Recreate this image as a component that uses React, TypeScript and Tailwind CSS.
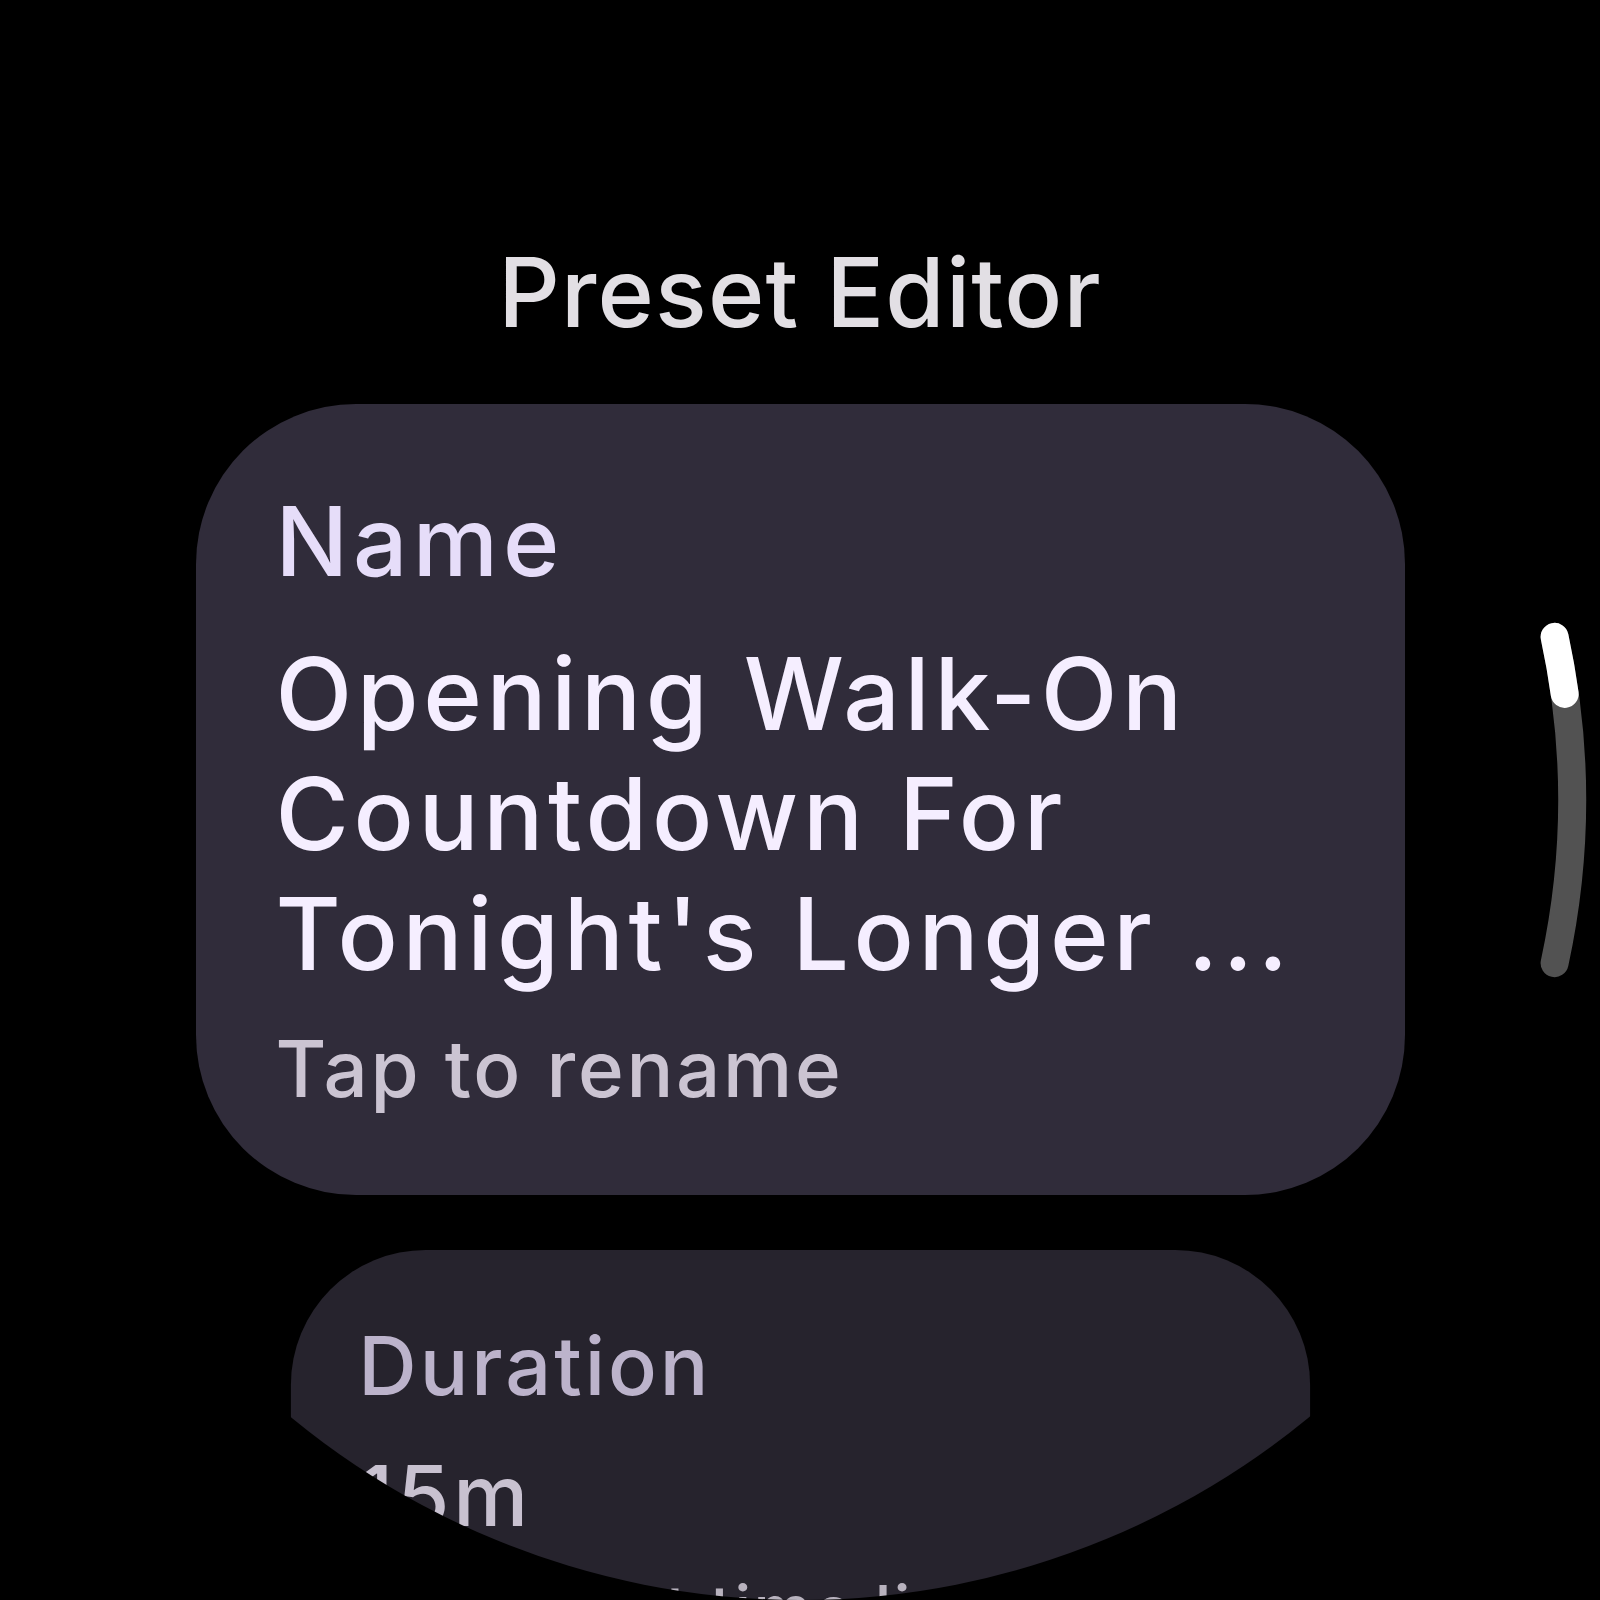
import React from "react";

type CardProps = {
  label: string;
  lines: string[];
  hint: string;
  outer: string;
  labelColor: string;
  valueColor: string;
  hintColor: string;
};

function Card({ label, lines, hint, outer, labelColor, valueColor, hintColor }: CardProps) {
  return (
    <div className={outer}>
      <div className={labelColor}>{label}</div>
      <div className={valueColor}>
        {lines.map((l, i) => (
          <div key={i} className="whitespace-nowrap">
            {l}
          </div>
        ))}
      </div>
      <div className={hintColor}>{hint}</div>
    </div>
  );
}

export default function App() {
  return (
    <div className="w-[1600px] h-[1600px] bg-black">
      <div className="relative w-[1600px] h-[1600px] rounded-full overflow-hidden bg-black font-['Inter',sans-serif]">
        <div className="flex flex-col items-center pt-[234px]">
          <h1 className="text-[96px] leading-[117.6px] font-medium text-[#e2dfe4] tracking-[1.2px]">
            Preset Editor
          </h1>
          <Card
            outer="mt-[52px] w-[1209px] rounded-[160px] bg-[#302c3a] pl-[80px] pr-[30px] pt-[79px] pb-[78px] flex flex-col"
            label="Name"
            labelColor="text-[96px] leading-[117.6px] font-medium text-[#e6ddf9] tracking-[5px]"
            lines={["Opening Walk-On", "Countdown For", "Tonight's Longer ..."]}
            valueColor="mt-[34px] text-[100px] leading-[120px] font-medium text-[#f5eeff] tracking-[4.6px]"
            hint="Tap to rename"
            hintColor="mt-[27px] text-[78px] leading-[96px] font-medium text-[#cbc4d2] tracking-[2.7px]"
          />
          <Card
            outer="mt-[55px] w-[1209px] rounded-[160px] bg-[#26232d] pl-[80px] pr-[30px] pt-[79px] pb-[78px] flex flex-col origin-top scale-[0.843]"
            label="Duration"
            labelColor="text-[96px] leading-[117.6px] font-medium text-[#bcb3cb] tracking-[3.5px]"
            lines={["15m"]}
            valueColor="mt-[34px] text-[100px] leading-[120px] font-medium text-[#c8c1d0] tracking-[4.6px]"
            hint="Tap to set time limit"
            hintColor="mt-[27px] text-[78px] leading-[96px] font-medium text-[#b8b2be] tracking-[2.7px]"
          />
        </div>
        <svg
          className="absolute inset-0 pointer-events-none"
          width="1600"
          height="1600"
          viewBox="0 0 1600 1600"
        >
          <path
            d="M 1554.6 636.9 A 772 772 0 0 1 1554.6 963.1"
            fill="none"
            stroke="#525252"
            strokeWidth="28"
            strokeLinecap="round"
          />
          <path
            d="M 1554.6 636.9 A 772 772 0 0 1 1564.7 693.9"
            fill="none"
            stroke="#ffffff"
            strokeWidth="28"
            strokeLinecap="round"
          />
        </svg>
      </div>
    </div>
  );
}
